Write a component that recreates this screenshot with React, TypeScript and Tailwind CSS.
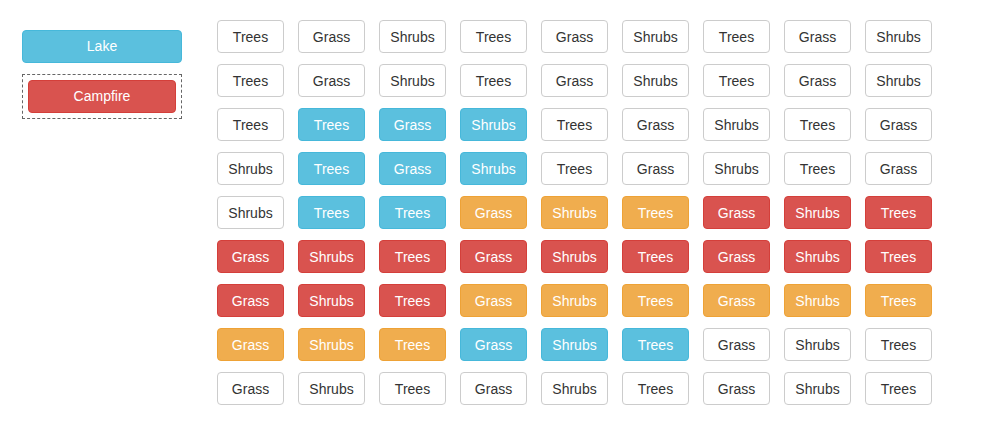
import React from 'react';

type Kind = 'd' | 'i' | 'w' | 'r';

const styles: Record<Kind, string> = {
	d: 'bg-white border-[#ccc] text-[#333]',
	i: 'bg-[#5bc0de] border-[#46b8da] text-white',
	w: 'bg-[#f0ad4e] border-[#eea236] text-white',
	r: 'bg-[#d9534f] border-[#d43f3a] text-white',
};

const names = ['Trees', 'Grass', 'Shrubs'];
const lastNames = ['Grass', 'Shrubs', 'Trees'];

// each row: [label, kind]
const rows: [string, Kind][][] = [
	names.concat(names, names).map(n => [n, 'd']),
	names.concat(names, names).map(n => [n, 'd']),
	[['Trees', 'd'], ['Trees', 'i'], ['Grass', 'i'], ['Shrubs', 'i'], ['Trees', 'd'], ['Grass', 'd'], ['Shrubs', 'd'], ['Trees', 'd'], ['Grass', 'd']],
	[['Shrubs', 'd'], ['Trees', 'i'], ['Grass', 'i'], ['Shrubs', 'i'], ['Trees', 'd'], ['Grass', 'd'], ['Shrubs', 'd'], ['Trees', 'd'], ['Grass', 'd']],
	[['Shrubs', 'd'], ['Trees', 'i'], ['Trees', 'i'], ['Grass', 'w'], ['Shrubs', 'w'], ['Trees', 'w'], ['Grass', 'r'], ['Shrubs', 'r'], ['Trees', 'r']],
	[['Grass', 'r'], ['Shrubs', 'r'], ['Trees', 'r'], ['Grass', 'r'], ['Shrubs', 'r'], ['Trees', 'r'], ['Grass', 'r'], ['Shrubs', 'r'], ['Trees', 'r']],
	[['Grass', 'r'], ['Shrubs', 'r'], ['Trees', 'r'], ['Grass', 'w'], ['Shrubs', 'w'], ['Trees', 'w'], ['Grass', 'w'], ['Shrubs', 'w'], ['Trees', 'w']],
	[['Grass', 'w'], ['Shrubs', 'w'], ['Trees', 'w'], ['Grass', 'i'], ['Shrubs', 'i'], ['Trees', 'i'], ['Grass', 'd'], ['Shrubs', 'd'], ['Trees', 'd']],
	lastNames.concat(lastNames, lastNames).map(n => [n, 'd']),
];

function Tile({ label, kind }: { label: string; kind: Kind }) {
	return (
		<button
			className={`h-[33px] w-[67px] rounded-[4px] border text-[14px] leading-none ${styles[kind]}`}
		>
			{label}
		</button>
	);
}

function App() {
	return (
		<div
			className="flex w-[981px] h-[436px] bg-white pl-[22px] pt-[20px]"
			style={{ fontFamily: '"Liberation Sans", Arial, sans-serif' }}
		>
			<div className="w-[160px] mt-[10px] flex flex-col gap-[11px]">
				<button className="h-[33px] w-[160px] rounded-[4px] border border-[#46b8da] bg-[#5bc0de] text-white text-[14px]">
					Lake
				</button>
				<div className="border border-dashed border-[#666] p-[5px]">
					<button className="h-[33px] w-full rounded-[4px] border border-[#d43f3a] bg-[#d9534f] text-white text-[14px]">
						Campfire
					</button>
				</div>
			</div>
			<div className="ml-[35px] grid grid-cols-[repeat(9,67px)] gap-x-[14px] gap-y-[11px] content-start">
				{rows.map((row, r) =>
					row.map(([label, kind], c) => <Tile key={`${r}-${c}`} label={label} kind={kind} />)
				)}
			</div>
		</div>
	);
}

export default App;
